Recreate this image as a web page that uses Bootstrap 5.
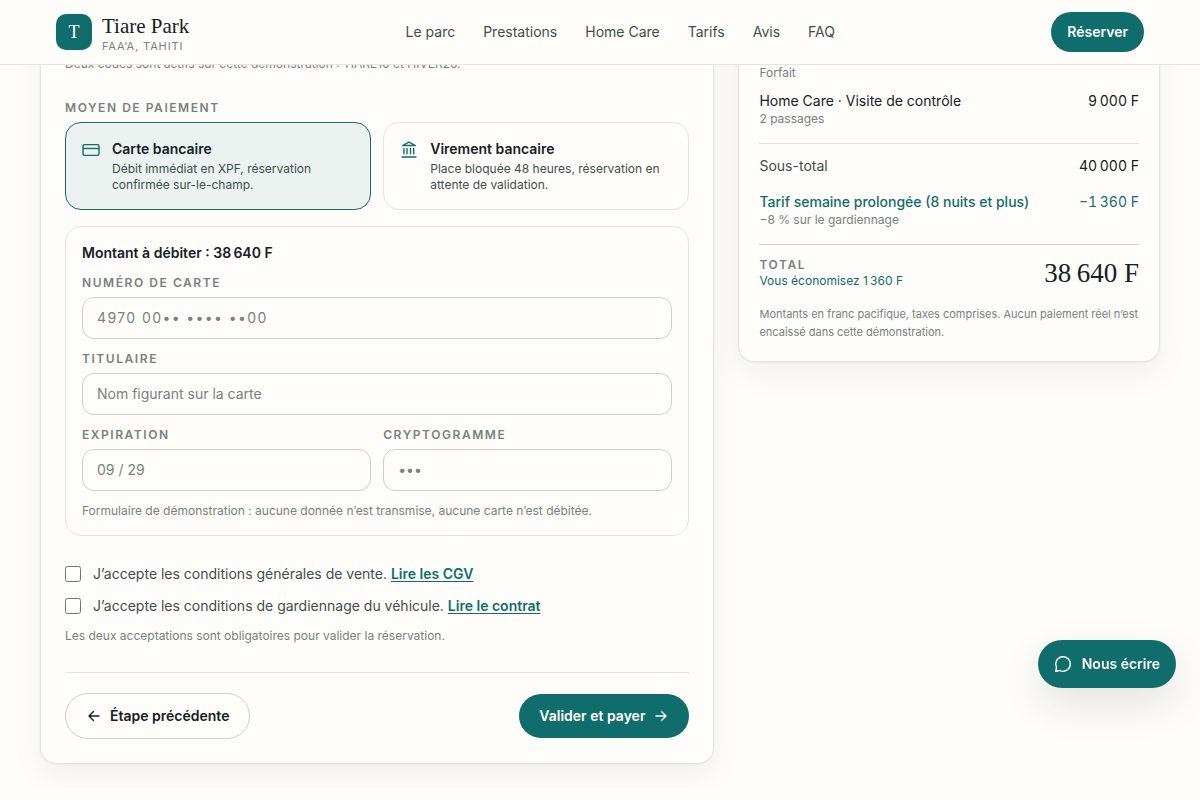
<!DOCTYPE html>
<html lang="fr">
<head>
<meta charset="utf-8">
<meta name="viewport" content="width=device-width, initial-scale=1">
<title>Tiare Park – Paiement</title>
<link href="https://cdn.jsdelivr.net/npm/bootstrap@5.3.0/dist/css/bootstrap.min.css" rel="stylesheet">
<style>
:root { --teal:#0f6e6b; --ink:#14211f; --ink-2:#3d4f4b; --ink-3:#73847f; --paper:#fffdf9; --line:#e4e5e1; --line-2:#cccfcb; }
body { font-family:Inter,"Liberation Sans",sans-serif; font-size:14px; line-height:20px; color:var(--ink); background:var(--paper); }
.serif { font-family:"Liberation Serif",serif; }
.wrap { max-width:1120px; }
.site-head { background:var(--paper); border-bottom:1px solid var(--line); }
.site-head .wrap { min-height:64px; }
.brand-link { gap:10px; }
.brand-tile { width:36px; height:36px; border-radius:10px; background:var(--teal); color:var(--paper); font-size:18px; }
.brand-name { font-size:21px; line-height:28px; color:var(--ink); }
.brand-place { font-size:11px; line-height:12px; letter-spacing:.08em; color:var(--ink-3); }
.site-nav { gap:28px; }
.site-nav a { color:var(--ink-2); text-decoration:none; }
.pill { --bs-btn-font-size:14px; --bs-btn-font-weight:600; --bs-btn-line-height:20px; --bs-btn-border-radius:24px; --bs-btn-padding-x:20px; --bs-btn-padding-y:12px;
  display:inline-flex; align-items:center; gap:8px; }
.pill-teal { --bs-btn-color:var(--paper); --bs-btn-bg:var(--teal); --bs-btn-hover-color:var(--paper); --bs-btn-hover-bg:#0b5956; --bs-btn-border-width:0; }
.pill-line { --bs-btn-color:var(--ink); --bs-btn-border-color:var(--line-2); --bs-btn-hover-border-color:var(--teal); }
.pill-compact { --bs-btn-padding-x:16px; --bs-btn-padding-y:10px; }
.booking { display:grid; grid-template-columns:minmax(0,1fr); gap:24px; align-items:start; }
@media (min-width:768px) { .booking { grid-template-columns:minmax(0,8fr) minmax(0,5fr); } }
.sheet { border:1px solid var(--line); border-top:0; border-radius:0 0 16px 16px; background:var(--paper); box-shadow:0 1px 2px rgba(20,33,31,.05),0 12px 32px rgba(20,33,31,.06); }
.sheet-form { padding:56px 24px 24px; }
.sheet-sum { padding:65px 20px 20px; }
.note { font-size:12px; line-height:16px; color:var(--ink-3); margin:0; }
.note-legal { font-size:11px; line-height:18px; }
.eyebrow { display:block; float:none; width:auto; font-size:12px; line-height:16px; font-weight:600; letter-spacing:.13em; text-transform:uppercase; color:var(--ink-3); margin:0 0 6px; }
.means { margin-top:28px; }
.pair { display:grid; grid-template-columns:repeat(auto-fit,minmax(200px,1fr)); gap:12px; }
.choice { display:flex; gap:12px; padding:16px; border:1px solid var(--line); border-radius:16px; cursor:pointer; }
.choice:has(:checked) { border-color:var(--teal); background:#ebf2ef; }
.choice svg { flex:none; margin-top:1px; color:var(--teal); }
.choice-text { font-size:12px; line-height:16px; color:var(--ink-2); margin-top:2px; }
.pay-box { border:1px solid var(--line); border-radius:16px; padding:16px; margin:16px 0 28px; }
.field { padding:10px 14px; border:1px solid var(--line-2); border-radius:12px; background:var(--paper); color:var(--ink); font-size:14px; line-height:20px; }
.field::placeholder { color:var(--ink-3); }
.field-code { letter-spacing:.1em; }
.tick { width:16px; height:16px; margin:0; flex:none; }
.terms, .tick-row { gap:12px; }
.terms { color:var(--ink-2); }
.terms a { color:var(--teal); font-weight:600; text-underline-offset:2px; }
.form-foot { border-top:1px solid var(--line); margin-top:28px; padding-top:20px; }
.teal { color:var(--teal); }
.soft { color:var(--ink-2); }
.amount { font-variant-numeric:tabular-nums; white-space:nowrap; }
.sum-line { padding-top:10px; }
.rule { border-top:1px solid var(--line); }
.rule-strong { border-top:1px solid var(--line-2); }
.grand { font-size:27px; line-height:32px; }
.chat { position:fixed; right:24px; bottom:112px; --bs-btn-padding-x:16px; --bs-btn-padding-y:14px; gap:10px; box-shadow:0 16px 40px rgba(20,33,31,.12); }
</style>
</head>
<body>
<header class="site-head fixed-top">
  <div class="wrap mx-auto px-3 d-flex align-items-center justify-content-between">
    <a href="#" class="brand-link d-flex align-items-center text-decoration-none">
      <span class="brand-tile serif d-flex align-items-center justify-content-center">T</span>
      <span class="d-flex flex-column"><span class="brand-name serif">Tiare Park</span><span class="brand-place">FAA’A, TAHITI</span></span>
    </a>
    <nav class="site-nav d-none d-md-flex" aria-label="Navigation principale">
      <a href="#">Le parc</a><a href="#">Prestations</a><a href="#">Home Care</a><a href="#">Tarifs</a><a href="#">Avis</a><a href="#">FAQ</a>
    </nav>
    <button type="button" class="btn pill pill-teal pill-compact">Réserver</button>
  </div>
</header>

<main class="wrap booking mx-auto pb-4">
  <form class="sheet sheet-form">
    <p class="note">Deux codes sont actifs sur cette démonstration : TIARE10 et HIVER26.</p>
    <fieldset class="means">
      <legend class="eyebrow">Moyen de paiement</legend>
      <div class="pair">
        <label class="choice">
          <input class="visually-hidden" type="radio" name="mode" checked>
          <svg width="18" height="18" viewBox="0 0 18 18" fill="none" stroke="currentColor" stroke-width="1.4"><rect x="1" y="4.6" width="16" height="10.8" rx="1.6"/><path d="M1 8.500h16"/></svg>
          <span class="d-flex flex-column"><span class="fw-semibold">Carte bancaire</span><span class="choice-text">Débit immédiat en XPF, réservation confirmée sur-le-champ.</span></span>
        </label>
        <label class="choice">
          <input class="visually-hidden" type="radio" name="mode">
          <svg width="18" height="18" viewBox="0 0 18 18" fill="none" stroke="currentColor" stroke-width="1.4" stroke-linecap="round" stroke-linejoin="round"><path d="M2.6 5.5 9 2.200l6.400 3.300zM4 8.500v5.300M7 8.500v5.300M10.500 8.500v5.300M13.700 8.500v5.300M2 17h14"/></svg>
          <span class="d-flex flex-column"><span class="fw-semibold">Virement bancaire</span><span class="choice-text">Place bloquée 48 heures, réservation en attente de validation.</span></span>
        </label>
      </div>
    </fieldset>

    <div class="pay-box d-grid">
      <div class="fw-semibold">Montant à débiter : 38&#8239;640&nbsp;F</div>
      <div class="pt-2 mt-1"><label class="eyebrow" for="num">Numéro de carte</label><input id="num" class="field field-code w-100" type="text" placeholder="4970 00•• •••• ••00"></div>
      <div class="pt-2 mt-1"><label class="eyebrow" for="nom">Titulaire</label><input id="nom" class="field w-100" type="text" placeholder="Nom figurant sur la carte"></div>
      <div class="pair pt-2 mt-1">
        <div><label class="eyebrow" for="exp">Expiration</label><input id="exp" class="field w-100" type="text" placeholder="09 / 29"></div>
        <div><label class="eyebrow" for="cvc">Cryptogramme</label><input id="cvc" class="field w-100" type="text" placeholder="•••"></div>
      </div>
      <p class="note pt-2 mt-1">Formulaire de démonstration : aucune donnée n’est transmise, aucune carte n’est débitée.</p>
    </div>

    <div class="terms d-grid">
      <div class="tick-row d-flex align-items-center"><input class="tick" type="checkbox" id="cgv"><span><label for="cgv">J’accepte les conditions générales de vente.</label> <a href="#">Lire les CGV</a></span></div>
      <div class="tick-row d-flex align-items-center"><input class="tick" type="checkbox" id="gard"><span><label for="gard">J’accepte les conditions de gardiennage du véhicule.</label> <a href="#">Lire le contrat</a></span></div>
      <p class="note">Les deux acceptations sont obligatoires pour valider la réservation.</p>
    </div>

    <div class="form-foot d-flex flex-wrap gap-2 align-items-center justify-content-between">
      <button type="button" class="btn pill pill-line"><svg width="16" height="16" viewBox="0 0 16 16" fill="none" stroke="currentColor" stroke-width="1.4" stroke-linecap="round" stroke-linejoin="round"><path d="M13 8H3M7.5 3.5 3 8l4.500 4.500"/></svg>Étape précédente</button>
      <button type="submit" class="btn pill pill-teal">Valider et payer<svg width="16" height="16" viewBox="0 0 16 16" fill="none" stroke="currentColor" stroke-width="1.4" stroke-linecap="round" stroke-linejoin="round"><path d="M3 8h10M8.500 3.500 13 8l-4.500 4.500"/></svg></button>
    </div>
  </form>

  <aside class="sheet sheet-sum">
    <p class="note">Forfait</p>
    <div class="sum-line d-flex justify-content-between gap-3 pb-3">
      <div><div>Home Care · Visite de contrôle</div><p class="note">2 passages</p></div>
      <div class="amount">9&#8239;000&nbsp;F</div>
    </div>
    <div class="rule d-flex justify-content-between gap-3 py-2">
      <div class="soft pt-1">Sous-total</div><div class="amount pt-1">40&#8239;000&nbsp;F</div>
    </div>
    <div class="d-flex justify-content-between gap-3 teal pt-2 pb-3">
      <div><div class="fw-medium">Tarif semaine prolongée (8 nuits et plus)</div><p class="note">−8 % sur le gardiennage</p></div>
      <div class="amount">−1&#8239;360&nbsp;F</div>
    </div>
    <div class="rule-strong d-flex justify-content-between align-items-center gap-3 py-2">
      <div class="py-1"><div class="eyebrow mb-0">Total</div><div class="note teal">Vous économisez 1&#8239;360&nbsp;F</div></div>
      <div class="grand serif amount">38&#8239;640&nbsp;F</div>
    </div>
    <p class="note note-legal pt-1">Montants en franc pacifique, taxes comprises. Aucun paiement réel n’est encaissé dans cette démonstration.</p>
  </aside>
</main>

<button type="button" class="btn pill pill-teal chat"><svg width="18" height="18" viewBox="0 0 18 18" fill="none" stroke="currentColor" stroke-width="1.4" stroke-linecap="round" stroke-linejoin="round"><path d="M1.700 16.300 2.500 12.300A7.300 7.300 0 1 1 5.700 15.500z"/></svg>Nous écrire</button>
<script src="https://cdn.jsdelivr.net/npm/bootstrap@5.3.0/dist/js/bootstrap.bundle.min.js"></script>
</body>
</html>
